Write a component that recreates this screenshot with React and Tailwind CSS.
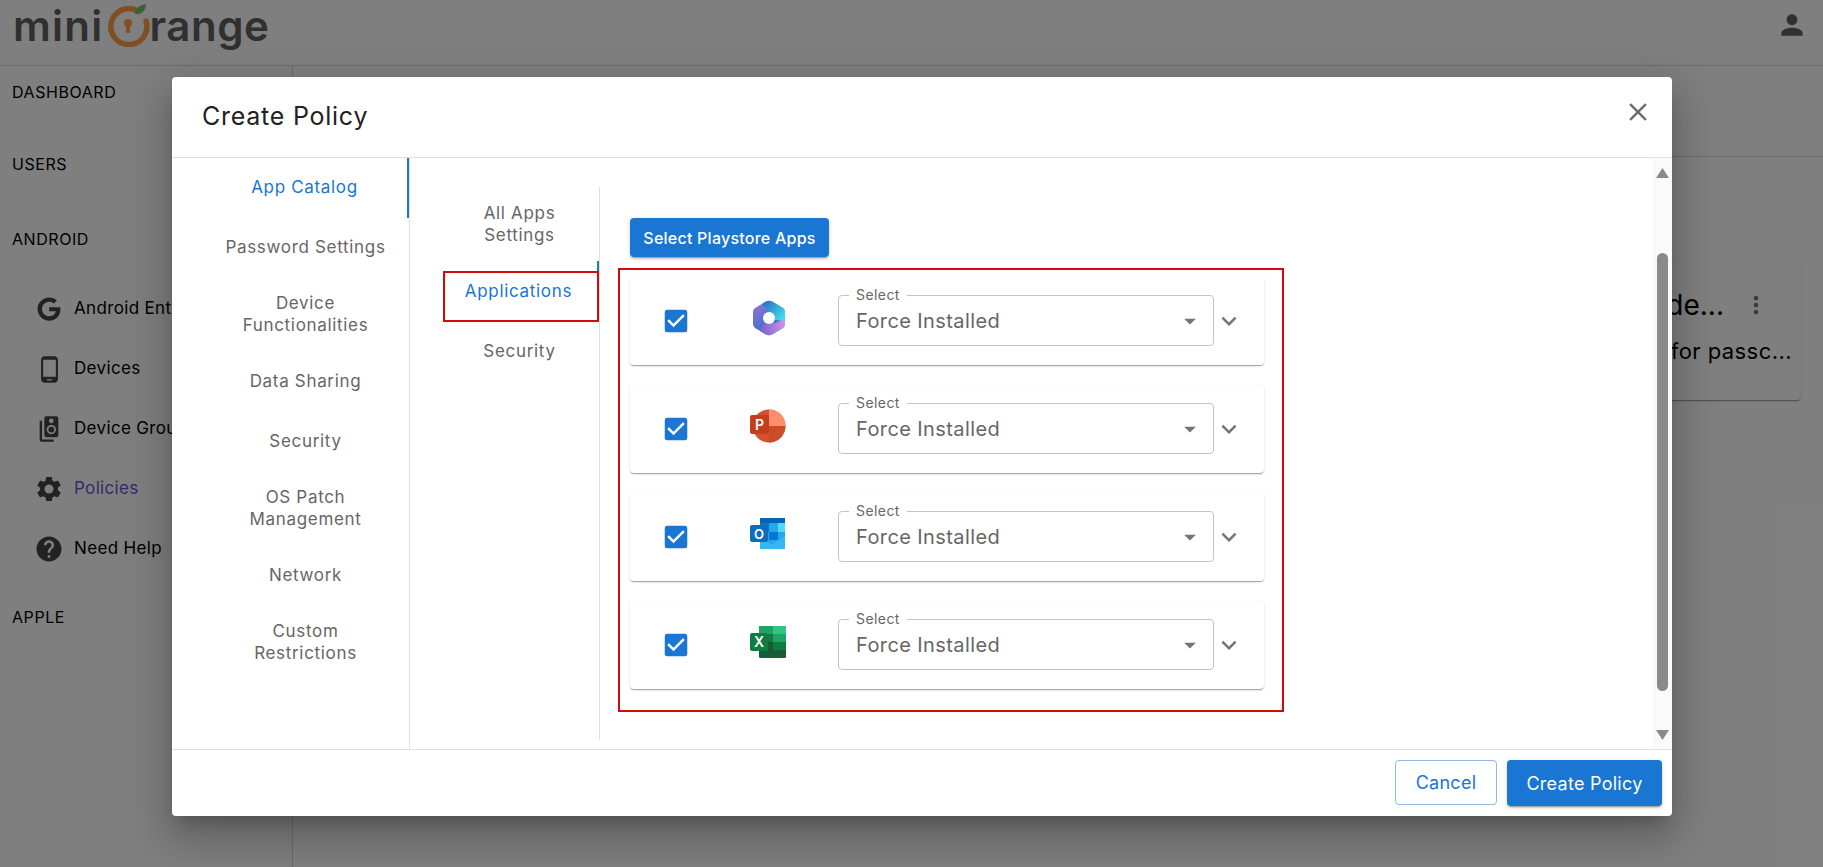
import { MdPhoneAndroid, MdSpeakerGroup, MdSettings, MdHelp, MdPerson, MdClose, MdExpandMore, MdArrowDropDown, MdMoreVert, MdCheckBox } from "react-icons/md";
import { FaGoogle } from "react-icons/fa";

const font = { fontFamily: "Inter, sans-serif" };

const Logo = () => (
    <div className="flex items-start pl-[13px] text-[#606060] text-[42px] font-semibold leading-[51px] tracking-[0.03em]">
        <span>mini</span>
        <svg width="44" height="44" viewBox="0 0 44 44" className="mt-[3px] ml-[3px]">
            <path d="M30 7.5A18 18 0 1 0 39 18" fill="none" stroke="#ff9f4a" strokeWidth="5.500" strokeLinecap="round" />
            <circle cx="21" cy="20" r="4" fill="#ff9f4a" />
            <rect x="19" y="20" width="4" height="10" fill="#ff9f4a" />
            <path d="M28 11C28 5 33 2 39 1C39 7 35 12 28 11Z" fill="#74c26a" />
        </svg>
        <span className="-ml-[1px] tracking-[0.012em]">range</span>
    </div>
);

const Microsoft365 = () => (
    <svg width="34" height="36" viewBox="0 0 34 36">
        <defs>
            <linearGradient id="m1" x1="0" y1="0" x2="1" y2="0.8"><stop offset="0" stopColor="#2468c0" /><stop offset="1" stopColor="#46dcef" /></linearGradient>
            <linearGradient id="m2" x1="0" y1="0" x2="0.5" y2="1"><stop offset="0" stopColor="#a06fd8" /><stop offset="1" stopColor="#2a74c8" /></linearGradient>
            <linearGradient id="m3" x1="0" y1="0" x2="1" y2="0"><stop offset="0" stopColor="#7a5cd0" /><stop offset="1" stopColor="#cf96e6" /></linearGradient>
        </defs>
        <path d="M14 1.5Q17 0 20 1.5L31 8Q33 9.500 33 12V24Q33 26.500 31 28L20 34.500Q17 36 14 34.500L3 28Q1 26.500 1 24V12Q1 9.500 3 8Z" fill="url(#m2)" />
        <path d="M10 4L14 1.5Q17 0 20 1.5L31 8Q33 9.500 33 12V21L23 20L17 12Z" fill="url(#m1)" />
        <path d="M8 31L14 34.500Q17 36 20 34.500L31 28Q33 26.500 33 24V19L23 23L12 24Z" fill="url(#m3)" />
        <circle cx="17" cy="18" r="6" fill="#fff" />
    </svg>
);

const PowerPoint = () => (
    <svg width="36" height="34" viewBox="0 0 36 34" className="-ml-[3px]">
        <circle cx="19" cy="17" r="16.500" fill="#d35230" />
        <path d="M19 .5A16.500 16.500 0 0 1 35.500 17H19Z" fill="#ff8f6b" />
        <path d="M19 17H35.500A16.500 16.500 0 0 1 19 33.500Z" fill="#ca4c28" />
        <rect x="0" y="6" width="19" height="19" rx="2" fill="#c43e1c" />
        <text x="9.500" y="20.500" textAnchor="middle" fontSize="14" fontWeight="600" fill="#fff" fontFamily="Inter, sans-serif">P</text>
    </svg>
);

const Outlook = () => (
    <svg width="36" height="32" viewBox="0 0 36 32" className="-ml-[3px]">
        <rect x="10" y="0" width="25" height="31" rx="1.500" fill="#28a8ea" />
        <rect x="10" y="0" width="25" height="5" fill="#0364b8" />
        <rect x="10" y="5" width="9" height="9" fill="#0078d4" />
        <rect x="19" y="5" width="9" height="9" fill="#28a8ea" />
        <rect x="28" y="5" width="7" height="9" fill="#50d9ff" />
        <rect x="19" y="14" width="9" height="8" fill="#0078d4" />
        <rect x="28" y="14" width="7" height="8" fill="#28a8ea" />
        <path d="M10 19L22 27L35 18V31H10Z" fill="#35b8f1" />
        <rect x="0" y="7" width="18" height="17" rx="2" fill="#0f6cbd" />
        <text x="9" y="20.500" textAnchor="middle" fontSize="13" fontWeight="600" fill="#fff" fontFamily="Inter, sans-serif">O</text>
    </svg>
);

const Excel = () => (
    <svg width="36" height="33" viewBox="0 0 36 33" className="-ml-[3px]">
        <rect x="9" y="0" width="27" height="32" rx="1.500" fill="#185c37" />
        <rect x="9" y="0" width="14" height="8" fill="#21a366" />
        <rect x="23" y="0" width="13" height="8" fill="#33c481" />
        <rect x="9" y="8" width="14" height="8" fill="#107c41" />
        <rect x="23" y="8" width="13" height="8" fill="#21a366" />
        <rect x="23" y="16" width="13" height="8" fill="#107c41" />
        <rect x="0" y="7" width="18" height="18" rx="2" fill="#107c41" />
        <text x="9" y="21" textAnchor="middle" fontSize="14" fontWeight="600" fill="#fff" fontFamily="Inter, sans-serif">X</text>
    </svg>
);

const navItems = [
    { label: "Android Enterprise", icon: <FaGoogle size={24} /> },
    { label: "Devices", icon: <MdPhoneAndroid size={29} /> },
    { label: "Device Groups", icon: <MdSpeakerGroup size={28} /> },
    { label: "Policies", icon: <MdSettings size={30} />, active: true },
    { label: "Need Help", icon: <MdHelp size={30} /> },
];

const mainTabs = [
    { label: ["App Catalog"], active: true },
    { label: ["Password Settings"] },
    { label: ["Device", "Functionalities"] },
    { label: ["Data Sharing"] },
    { label: ["Security"] },
    { label: ["OS Patch", "Management"] },
    { label: ["Network"] },
    { label: ["Custom", "Restrictions"] },
];

const apps = [
    { name: "Microsoft 365", logo: <Microsoft365 /> },
    { name: "PowerPoint", logo: <PowerPoint /> },
    { name: "Outlook", logo: <Outlook /> },
    { name: "Excel", logo: <Excel /> },
];

const Sidebar = () => (
    <div className="w-[293px] h-full border-r border-[#d8d8d8] shrink-0 text-black text-[16px] tracking-[0.035em]">
        <div className="h-[52px] flex items-center pl-[12px]">DASHBOARD</div>
        <div className="h-[72px] flex items-center pl-[12px] pt-[19px]">USERS</div>
        <div className="h-[75px] flex items-center pl-[12px] pt-[23px]">ANDROID</div>
        <div className="flex flex-col mt-[14px] text-[17px] tracking-[0.02em]">
            {navItems.map((item) => (
                <div key={item.label} className={`h-[60px] flex items-center ${item.active ? "text-[#6259d8]" : "text-black"}`}>
                    <div className="w-[74px] pl-[24px] flex justify-center text-[#454545]">{item.icon}</div>
                    <span className="whitespace-nowrap">{item.label}</span>
                </div>
            ))}
        </div>
        <div className="pl-[12px] mt-[26px]">APPLE</div>
    </div>
);

const AppRow = ({ app }) => (
    <div className="h-[88px] rounded-[4px] bg-white flex items-center pl-[31px] shadow-[0_2px_1px_-1px_rgba(0,0,0,0.2),0_1px_1px_0_rgba(0,0,0,0.14),0_1px_3px_0_rgba(0,0,0,0.12)]">
        <MdCheckBox size={30} className="text-[#1976d2] -mt-[1px]" />
        <div className="w-[36px] ml-[60px] -mt-[6px] flex justify-center">{app.logo}</div>
        <div className="relative ml-[51px] -mt-[1px] w-[376px] h-[51px] rounded-[4px] border border-[#c4c4c4] flex items-center pl-[17px]">
            <span className="absolute -top-[10px] left-[10px] bg-white px-[7px] text-[14px] leading-[18px] tracking-[0.03em] text-[#666666]">Select</span>
            <span className="text-[20px] tracking-[0.02em] text-[#666666]">Force Installed</span>
            <MdArrowDropDown size={28} className="ml-auto mr-[9px] text-[#757575]" />
        </div>
        <MdExpandMore size={30} className="text-[#757575]" />
    </div>
);

export default function App() {
    return (
        <div className="relative h-screen w-full overflow-hidden bg-white" style={font}>
            <div className="h-[66px] border-b border-[#d8d8d8] bg-white flex items-start justify-between">
                <Logo />
                <MdPerson size={32} className="mr-[15px] mt-[9px] text-[#606060]" />
            </div>
            <div className="flex h-[801px]">
                <Sidebar />
                <div className="flex-1">
                    <div className="h-[91px] border-b border-[#d8d8d8]"></div>
                    <div className="flex justify-end mt-[106px] mr-[22px]">
                        <div className="w-[420px] h-[137px] rounded-[4px] bg-white shadow-[0_2px_1px_-1px_rgba(0,0,0,0.2),0_1px_1px_0_rgba(0,0,0,0.14),0_1px_3px_0_rgba(0,0,0,0.12)] flex flex-col items-end pt-[21px] pr-[9px] text-black">
                            <div className="flex items-center mr-[16px]">
                                <span className="text-[28px] mr-[18px]">Passcode...</span>
                                <MdMoreVert size={28} className="text-[#757575] mr-[6px]" />
                            </div>
                            <div className="text-[22px] tracking-[0.02em] mt-[9px]">Policy for passc...</div>
                        </div>
                    </div>
                </div>
            </div>

            <div className="absolute inset-0 bg-black/50 pl-[172px] pt-[77px]">
                <div className="w-[1500px] h-[739px] bg-white rounded-[4px] flex flex-col shadow-[0_11px_15px_-7px_rgba(0,0,0,0.2),0_24px_38px_3px_rgba(0,0,0,0.14),0_9px_46px_8px_rgba(0,0,0,0.12)]">
                    <div className="h-[81px] shrink-0 border-b border-[#e0e0e0] flex items-center justify-between pl-[30px] pr-[19px]">
                        <h2 className="text-[25px] text-[#222222] tracking-[0.03em] -mt-[1px]">Create Policy</h2>
                        <MdClose size={30} className="text-[#6e6e6e] -mt-[10px]" />
                    </div>

                    <div className="flex-1 flex min-h-0">
                        <div className="w-[238px] shrink-0 border-r border-[#e0e0e0] flex flex-col">
                            {mainTabs.map((tab) => (
                                <div
                                    key={tab.label.join(" ")}
                                    className={`flex flex-col items-center justify-center pl-[30px] pb-[2px] text-[17px] leading-[22px] tracking-[0.04em] ${tab.label.length > 1 ? "h-[74px]" : "h-[60px]"} ${tab.active ? "text-[#1976d2] border-r-2 border-[#1976d2]" : "text-[#666666]"}`}
                                >
                                    {tab.label.map((line) => <span key={line}>{line}</span>)}
                                </div>
                            ))}
                        </div>

                        <div className="w-[190px] h-[553px] shrink-0 mt-[29px] border-r border-[#e0e0e0] flex flex-col text-[17px] leading-[22px] tracking-[0.04em] text-[#666666]">
                            <div className="h-[74px] pl-[30px] flex flex-col items-center justify-center">
                                <span>All Apps</span>
                                <span>Settings</span>
                            </div>
                            <div className="relative h-[60px] pl-[30px] flex items-center justify-center text-[#1976d2] border-r-2 border-[#1976d2]">
                                <span>Applications</span>
                                <div className="absolute left-[33px] top-[10px] -right-[2px] bottom-[-1px] border-2 border-[#d10a0a]"></div>
                            </div>
                            <div className="h-[60px] pl-[30px] flex items-center justify-center">Security</div>
                        </div>

                        <div className="flex-1 pl-[18px] pt-[60px]">
                            <div className="ml-[12px] w-[199px] h-[39px] rounded-[4px] bg-[#1976d2] text-white text-[16px] tracking-[0.015em] font-medium flex items-center justify-center shadow-[0_3px_1px_-2px_rgba(0,0,0,0.2),0_2px_2px_0_rgba(0,0,0,0.14),0_1px_5px_0_rgba(0,0,0,0.12)]">
                                Select Playstore Apps
                            </div>
                            <div className="mt-[11px] w-[666px] border-2 border-[#d10a0a] pl-[10px] pr-[18px] pt-[7px] pb-[21px] flex flex-col gap-[20px]">
                                {apps.map((app) => <AppRow key={app.name} app={app} />)}
                            </div>
                        </div>

                        <div className="w-[19px] shrink-0 bg-[#fafafa] flex flex-col items-center pt-[10px] pb-[9px]">
                            <svg width="13" height="10" viewBox="0 0 13 10"><path d="M6.500 0L13 10H0Z" fill="#8a8a8a" /></svg>
                            <div className="w-[11px] h-[438px] mt-[75px] rounded-full bg-[#8a8a8a]"></div>
                            <svg width="13" height="10" viewBox="0 0 13 10" className="mt-auto"><path d="M0 0H13L6.500 10Z" fill="#8a8a8a" /></svg>
                        </div>
                    </div>

                    <div className="h-[67px] shrink-0 border-t border-[#e0e0e0] flex items-start justify-end gap-[10px] pt-[10px] pr-[10px] text-[18px] tracking-[0.015em]">
                        <div className="w-[102px] h-[45px] rounded-[4px] border border-[#8fb9e3] text-[#1976d2] flex items-center justify-center">Cancel</div>
                        <div className="w-[155px] h-[46px] rounded-[4px] bg-[#1976d2] text-white flex items-center justify-center shadow-[0_3px_1px_-2px_rgba(0,0,0,0.2),0_2px_2px_0_rgba(0,0,0,0.14),0_1px_5px_0_rgba(0,0,0,0.12)]">Create Policy</div>
                    </div>
                </div>
            </div>
        </div>
    );
}
